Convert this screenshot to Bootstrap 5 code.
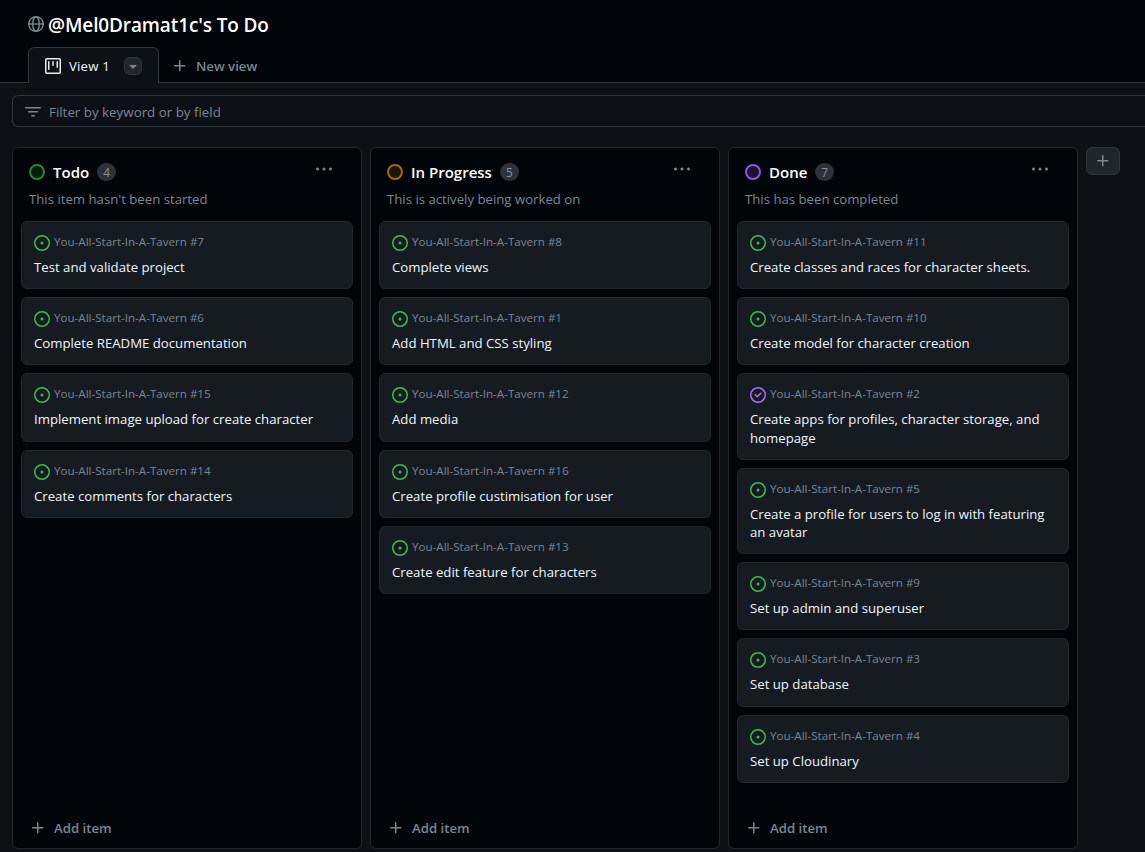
<!DOCTYPE html>
<html lang="en" data-bs-theme="dark">
<head>
<meta charset="utf-8">
<meta name="viewport" content="width=device-width, initial-scale=1">
<title>@Mel0Dramat1c's To Do</title>
<link rel="stylesheet" href="https://cdn.jsdelivr.net/npm/bootstrap@5.3.0/dist/css/bootstrap.min.css">
<style>
  body { background: #0d1117; color: #e6edf3; font-family: "Open Sans", "Noto Sans", sans-serif; font-size: 13.2px; line-height: 20px; height: 852px; overflow: hidden; }
  svg { display: block; flex: none; fill: currentColor; }
  .dim { color: #7d8590; }
  .top-area { background: #010409; height: 83px; padding-left: 28px; border-bottom: 1px solid #30363d; }
  .top-area h1 { font-size: 19px; line-height: 28px; font-weight: 600; letter-spacing: -.12px; }
  .title-row { height: 47px; padding-top: 11px; gap: 4px; }
  .title-row svg { margin-top: 5px; }
  .view-tab { width: 131px; height: 36px; background: #0d1117; border: 1px solid #30363d; border-bottom: 0; border-radius: 6px 6px 0 0; padding: 1px 16px 0; }
  .view-name { font-weight: 500; color: #f0f6fc; letter-spacing: .2px; }
  .tab-menu { width: 18px; height: 18px; border: 1px solid #30363d; border-radius: 6px; background: #21262d; }
  .new-view { padding: 1px 0 0 13px; gap: 8px; font-weight: 600; }
  .filter-box { height: 32px; margin: 12px 0 0 12px; border: 1px solid #30363d; border-right: 0; border-radius: 6px 0 0 6px; padding: 1px 12px 0; gap: 8px; font-size: 13.35px; }
  .board { margin: 20px 0 0 12px; gap: 8px; }
  .lane { width: 350px; height: 702px; background: #010409; border: 1px solid #21262d; border-radius: 6px; padding: 12px 8px 10px; flex: none; }
  .lane-head { padding: 0 8px; height: 24px; }
  .lane-head h2 { font-size: 15px; line-height: 24px; font-weight: 600; margin: 0 8px; }
  .ring { width: 16px; height: 16px; border: 2px solid; border-radius: 50%; }
  .ring-green { border-color: #238636; background: rgba(46,160,67,.15); }
  .ring-amber { border-color: #9e6a03; background: rgba(187,128,9,.15); }
  .ring-violet { border-color: #8957e5; background: rgba(163,113,247,.15); }
  .tally { min-width: 18px; height: 18px; padding: 0 6px; border-radius: 9px; background: #2d3139; color: #8b929c; font-size: 11.8px; line-height: 18px; font-weight: 500; }
  .lane-head .dots { margin: -6px 13px 0 auto; }
  .lane-note { padding: 0 8px; margin: 5px 0 12px; }
  .issue { background: #161b22; color: #f0f6fc; border: 1px solid #21262d; border-radius: 6px; padding: 11px 12px 12px; margin-bottom: 8px; line-height: 18.2px; }
  .issue-ref { height: 20px; margin-bottom: 5px; gap: 4px; font-size: 11.6px; }
  .issue-ref svg { color: #3fb950; }
  .issue-ref svg.closed { color: #a371f7; }
  .issue-ref span { margin-top: -2px; }
  .add-item { padding: 0 9px; gap: 8px; font-weight: 600; }
  .add-lane { width: 34px; height: 28px; border: 1px solid #30363d; border-radius: 6px; background: #21262d; }
</style>
</head>
<body>
<svg width="0" height="0" class="position-absolute" aria-hidden="true">
  <symbol id="open" viewBox="0 0 16 16"><path d="M8 9.5a1.5 1.5 0 1 0 0-3 1.5 1.5 0 0 0 0 3Z"/><path d="M8 0a8 8 0 1 1 0 16A8 8 0 0 1 8 0ZM1.5 8a6.5 6.5 0 1 0 13 0 6.5 6.5 0 0 0-13 0Z"/></symbol>
  <symbol id="done" viewBox="0 0 16 16"><path d="M11.28 6.78a.75.75 0 0 0-1.06-1.06L7.25 8.69 5.78 7.22a.75.75 0 0 0-1.06 1.06l2 2a.75.75 0 0 0 1.06 0l3.5-3.5Z"/><path d="M16 8A8 8 0 1 1 0 8a8 8 0 0 1 16 0Zm-1.5 0a6.5 6.5 0 1 0-13 0 6.5 6.5 0 0 0 13 0Z"/></symbol>
  <symbol id="plus" viewBox="0 0 16 16"><path d="M7.75 2a.75.75 0 0 1 .75.75V7h4.25a.75.75 0 0 1 0 1.5H8.5v4.25a.75.75 0 0 1-1.5 0V8.5H2.75a.75.75 0 0 1 0-1.5H7V2.75A.75.75 0 0 1 7.75 2Z"/></symbol>
  <symbol id="dots" viewBox="0 0 16 16"><circle cx="1.5" cy="8" r="1.5"/><circle cx="8" cy="8" r="1.5"/><circle cx="14.5" cy="8" r="1.5"/></symbol>
</svg>

<header class="top-area">
  <div class="title-row d-flex align-items-start">
    <svg class="dim" width="16" height="16" viewBox="0 0 16 16"><g fill="none" stroke="currentColor" stroke-width="1.4"><circle cx="8" cy="8" r="7.3"/><ellipse cx="8" cy="8" rx="3.3" ry="7.3"/><path d="M.7 8h14.6"/></g></svg>
    <h1 class="m-0">@Mel0Dramat1c's To Do</h1>
  </div>
  <nav class="d-flex">
    <div class="view-tab d-flex align-items-center">
      <svg width="16" height="16" viewBox="0 0 16 16"><rect x=".75" y=".75" width="14.5" height="14.5" rx="1" fill="none" stroke="currentColor" stroke-width="1.5"/><path d="M3 3.75a.75.75 0 0 1 1.5 0v7.5a.75.75 0 0 1-1.5 0ZM7.25 3.75a.75.75 0 0 1 1.5 0v3.5a.75.75 0 0 1-1.5 0ZM11.5 3.75a.75.75 0 0 1 1.5 0v5.5a.75.75 0 0 1-1.5 0Z"/></svg>
      <span class="view-name ms-2">View 1</span>
      <span class="tab-menu dim ms-auto d-flex align-items-center justify-content-center"><svg width="16" height="16" viewBox="0 0 16 16"><path d="m4.427 7.427 3.396 3.396a.25.25 0 0 0 .354 0l3.396-3.396A.25.25 0 0 0 11.396 7H4.604a.25.25 0 0 0-.177.427Z"/></svg></span>
    </div>
    <div class="new-view dim d-flex align-items-center"><svg width="16" height="16"><use href="#plus"/></svg><span>New view</span></div>
  </nav>
</header>

<div class="filter-box dim d-flex align-items-center">
  <svg width="16" height="16" viewBox="0 0 16 16"><path d="M.75 3h14.5a.75.75 0 0 1 0 1.5H.75a.75.75 0 0 1 0-1.5ZM3 7.75A.75.75 0 0 1 3.75 7h8.5a.75.75 0 0 1 0 1.5h-8.5A.75.75 0 0 1 3 7.75Zm3 4a.75.75 0 0 1 .75-.75h2.5a.75.75 0 0 1 0 1.5h-2.5a.75.75 0 0 1-.75-.75Z"/></svg>
  <span>Filter by keyword or by field</span>
</div>

<main class="board d-flex align-items-start">
  <section class="lane d-flex flex-column">
    <div class="lane-head d-flex align-items-center"><span class="ring ring-green"></span><h2>Todo</h2><span class="tally">4</span><svg class="dots dim" width="16" height="16"><use href="#dots"/></svg></div>
    <div class="lane-note dim">This item hasn't been started</div>
    <div class="issue"><div class="issue-ref dim d-flex align-items-center"><svg width="16" height="16"><use href="#open"/></svg><span>You-All-Start-In-A-Tavern #7</span></div><div>Test and validate project</div></div>
    <div class="issue"><div class="issue-ref dim d-flex align-items-center"><svg width="16" height="16"><use href="#open"/></svg><span>You-All-Start-In-A-Tavern #6</span></div><div>Complete README documentation</div></div>
    <div class="issue"><div class="issue-ref dim d-flex align-items-center"><svg width="16" height="16"><use href="#open"/></svg><span>You-All-Start-In-A-Tavern #15</span></div><div>Implement image upload for create character</div></div>
    <div class="issue"><div class="issue-ref dim d-flex align-items-center"><svg width="16" height="16"><use href="#open"/></svg><span>You-All-Start-In-A-Tavern #14</span></div><div>Create comments for characters</div></div>
    <div class="add-item dim d-flex align-items-center mt-auto"><svg width="16" height="16"><use href="#plus"/></svg><span>Add item</span></div>
  </section>

  <section class="lane d-flex flex-column">
    <div class="lane-head d-flex align-items-center"><span class="ring ring-amber"></span><h2>In Progress</h2><span class="tally">5</span><svg class="dots dim" width="16" height="16"><use href="#dots"/></svg></div>
    <div class="lane-note dim">This is actively being worked on</div>
    <div class="issue"><div class="issue-ref dim d-flex align-items-center"><svg width="16" height="16"><use href="#open"/></svg><span>You-All-Start-In-A-Tavern #8</span></div><div>Complete views</div></div>
    <div class="issue"><div class="issue-ref dim d-flex align-items-center"><svg width="16" height="16"><use href="#open"/></svg><span>You-All-Start-In-A-Tavern #1</span></div><div>Add HTML and CSS styling</div></div>
    <div class="issue"><div class="issue-ref dim d-flex align-items-center"><svg width="16" height="16"><use href="#open"/></svg><span>You-All-Start-In-A-Tavern #12</span></div><div>Add media</div></div>
    <div class="issue"><div class="issue-ref dim d-flex align-items-center"><svg width="16" height="16"><use href="#open"/></svg><span>You-All-Start-In-A-Tavern #16</span></div><div>Create profile custimisation for user</div></div>
    <div class="issue"><div class="issue-ref dim d-flex align-items-center"><svg width="16" height="16"><use href="#open"/></svg><span>You-All-Start-In-A-Tavern #13</span></div><div>Create edit feature for characters</div></div>
    <div class="add-item dim d-flex align-items-center mt-auto"><svg width="16" height="16"><use href="#plus"/></svg><span>Add item</span></div>
  </section>

  <section class="lane d-flex flex-column">
    <div class="lane-head d-flex align-items-center"><span class="ring ring-violet"></span><h2>Done</h2><span class="tally">7</span><svg class="dots dim" width="16" height="16"><use href="#dots"/></svg></div>
    <div class="lane-note dim">This has been completed</div>
    <div class="issue"><div class="issue-ref dim d-flex align-items-center"><svg width="16" height="16"><use href="#open"/></svg><span>You-All-Start-In-A-Tavern #11</span></div><div>Create classes and races for character sheets.</div></div>
    <div class="issue"><div class="issue-ref dim d-flex align-items-center"><svg width="16" height="16"><use href="#open"/></svg><span>You-All-Start-In-A-Tavern #10</span></div><div>Create model for character creation</div></div>
    <div class="issue"><div class="issue-ref dim d-flex align-items-center"><svg class="closed" width="16" height="16"><use href="#done"/></svg><span>You-All-Start-In-A-Tavern #2</span></div><div>Create apps for profiles, character storage, and homepage</div></div>
    <div class="issue"><div class="issue-ref dim d-flex align-items-center"><svg width="16" height="16"><use href="#open"/></svg><span>You-All-Start-In-A-Tavern #5</span></div><div>Create a profile for users to log in with featuring an avatar</div></div>
    <div class="issue"><div class="issue-ref dim d-flex align-items-center"><svg width="16" height="16"><use href="#open"/></svg><span>You-All-Start-In-A-Tavern #9</span></div><div>Set up admin and superuser</div></div>
    <div class="issue"><div class="issue-ref dim d-flex align-items-center"><svg width="16" height="16"><use href="#open"/></svg><span>You-All-Start-In-A-Tavern #3</span></div><div>Set up database</div></div>
    <div class="issue"><div class="issue-ref dim d-flex align-items-center"><svg width="16" height="16"><use href="#open"/></svg><span>You-All-Start-In-A-Tavern #4</span></div><div>Set up Cloudinary</div></div>
    <div class="add-item dim d-flex align-items-center mt-auto"><svg width="16" height="16"><use href="#plus"/></svg><span>Add item</span></div>
  </section>

  <div class="add-lane dim d-flex align-items-center justify-content-center"><svg width="16" height="16"><use href="#plus"/></svg></div>
</main>
<script src="https://cdn.jsdelivr.net/npm/bootstrap@5.3.0/dist/js/bootstrap.bundle.min.js"></script>
</body>
</html>
